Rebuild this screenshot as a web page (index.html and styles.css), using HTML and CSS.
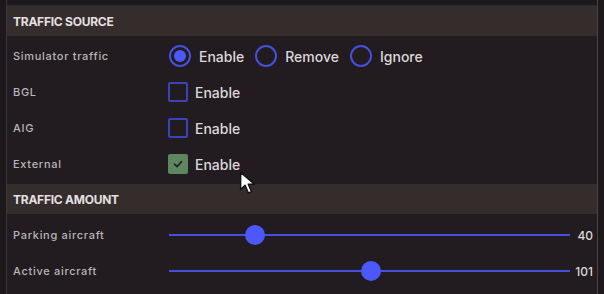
FILE: index.html
```html
<!DOCTYPE html>
<html lang="en">
<head>
    <meta charset="UTF-8">
    <meta name="viewport" content="width=device-width, initial-scale=1.0">
    <title>Traffic settings</title>
    <link rel="stylesheet" href="styles.css">
</head>
<body>
    <div class="lateral esquerda"></div>
    <div class="painel">
        <div class="topo"></div>

        <section class="secao">
            <h2 class="titulo">Traffic source</h2>
            <div class="linhas">
                <div class="linha">
                    <span class="rotulo">Simulator traffic</span>
                    <div class="opcoes">
                        <label class="opcao radio"><span class="bola marcada"></span>Enable</label>
                        <label class="opcao radio"><span class="bola"></span>Remove</label>
                        <label class="opcao radio"><span class="bola"></span>Ignore</label>
                    </div>
                </div>
                <div class="linha">
                    <span class="rotulo">BGL</span>
                    <div class="opcoes">
                        <label class="opcao caixa"><span class="quadrado"></span>Enable</label>
                    </div>
                </div>
                <div class="linha">
                    <span class="rotulo">AIG</span>
                    <div class="opcoes">
                        <label class="opcao caixa"><span class="quadrado"></span>Enable</label>
                    </div>
                </div>
                <div class="linha">
                    <span class="rotulo">External</span>
                    <div class="opcoes">
                        <label class="opcao caixa"><span class="quadrado marcado">
                            <svg width="12" height="12" viewBox="0 0 12 12"><path d="M2.5 6.2 L5 8.6 L9.6 3.6" fill="none" stroke="#1e261e" stroke-width="1.6" stroke-linecap="round" stroke-linejoin="round"/></svg>
                        </span>Enable</label>
                        <svg class="cursor" width="22" height="28" viewBox="0 0 20 24">
                            <path d="M1.5 1.5 L1.5 17 L5.5 13.2 L8.6 20.2 L11.4 19 L8.4 12.2 L14 12.2 Z" fill="#ffffff" stroke="#111111" stroke-width="1.3" stroke-linejoin="round"/>
                        </svg>
                    </div>
                </div>
            </div>
        </section>

        <section class="secao">
            <h2 class="titulo">Traffic amount</h2>
            <div class="linhas quantidade">
                <div class="linha">
                    <span class="rotulo">Parking aircraft</span>
                    <input class="slider" type="range" min="0" max="200" value="40">
                    <span class="valor">40</span>
                </div>
                <div class="linha">
                    <span class="rotulo">Active aircraft</span>
                    <input class="slider" type="range" min="0" max="200" value="101">
                    <span class="valor">101</span>
                </div>
            </div>
        </section>
    </div>
    <div class="lateral direita"></div>
</body>
</html>
```

FILE: styles.css
```css
/* Variáveis globais */
:root {
    --fonte: 'Inter', 'Roboto', sans-serif;
    --fundo: #1c181b;
    --painel: #221c20;
    --cabecalho: #352c2c;
    --linha-borda: #3d373b;
    --texto: #dcd8db;
    --texto-rotulo: #b9b4b7;
    --azul: #4c58fb;
    --azul-borda: #4550dc;
    --azul-caixa: #3c43b8;
    --verde: #5f8661;
}

body {
    margin: 0;
    height: 294px;
    display: flex;
    background-color: var(--fundo);
    font-family: var(--fonte);
    color: var(--texto);
    overflow: hidden;
}

.lateral {
    flex: none;
}

.esquerda {
    width: 6px;
    border-right: 1px solid var(--linha-borda);
}

.direita {
    width: 6px;
    border-left: 1px solid #4a4448;
}

.painel {
    flex: 1;
    display: flex;
    flex-direction: column;
    background-color: var(--painel);
}

.topo {
    height: 6px;
    background-color: var(--fundo);
    border-bottom: 1px solid #2a2740;
    box-sizing: border-box;
}

.titulo {
    margin: 0;
    height: 30px;
    display: flex;
    align-items: center;
    padding-left: 6px;
    background-color: var(--cabecalho);
    font-size: 12px;
    font-weight: 700;
    letter-spacing: -0.25px;
    text-transform: uppercase;
    color: #e4e0e2;
}

.linhas {
    padding: 2px 0;
}

.quantidade {
    padding-top: 3px;
}

.linha {
    height: 36px;
    display: flex;
    align-items: center;
    padding-left: 6px;
}

.rotulo {
    width: 155px;
    flex: none;
    font-size: 11px;
    font-weight: 500;
    letter-spacing: 0.7px;
    color: var(--texto-rotulo);
}

.opcoes {
    position: relative;
    display: flex;
    align-items: center;
    gap: 10px;
}

.opcao {
    display: flex;
    align-items: center;
    font-size: 14px;
    font-weight: 500;
    color: var(--texto);
}

.radio {
    gap: 8px;
}

.caixa {
    gap: 7px;
}

.bola {
    width: 22px;
    height: 22px;
    box-sizing: border-box;
    border: 2px solid var(--azul-borda);
    border-radius: 50%;
    display: flex;
    align-items: center;
    justify-content: center;
    margin-left: 1px;
}

.bola.marcada::after {
    content: '';
    width: 12px;
    height: 12px;
    border-radius: 50%;
    background-color: var(--azul);
}

.quadrado {
    width: 20px;
    height: 20px;
    box-sizing: border-box;
    border: 2px solid var(--azul-caixa);
    border-radius: 2px;
    display: flex;
    align-items: center;
    justify-content: center;
}

.quadrado.marcado {
    border: none;
    background-color: var(--verde);
}

.cursor {
    position: absolute;
    left: 71px;
    top: 16px;
}

/* Slider */
.slider {
    -webkit-appearance: none;
    appearance: none;
    margin: 0 0 0 1px;
    width: 401px;
    height: 20px;
    background: transparent;
}

.slider::-webkit-slider-runnable-track {
    height: 2px;
    background-color: var(--azul-borda);
}

.slider::-webkit-slider-thumb {
    -webkit-appearance: none;
    width: 20px;
    height: 20px;
    margin-top: -9px;
    border-radius: 50%;
    background-color: var(--azul);
    border: none;
}

.valor {
    flex: 1;
    text-align: right;
    padding-right: 4px;
    font-size: 12px;
    font-weight: 500;
    color: var(--texto);
}
```
